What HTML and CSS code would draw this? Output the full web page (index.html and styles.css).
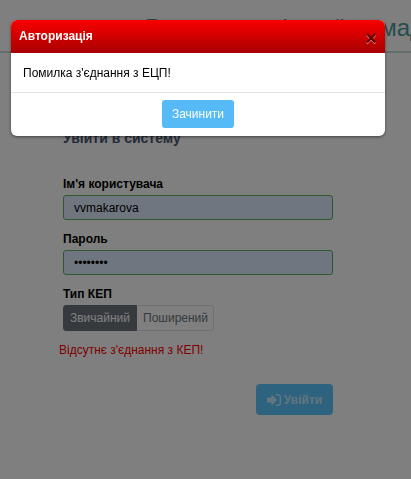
FILE: index.html
```html
<!DOCTYPE html>
<html lang="uk">
<head>
<meta charset="utf-8">
<title>Авторизація</title>
<link rel="stylesheet" href="styles.css">
</head>
<body>
<header class="top">
  <h1 class="top-title">Реєстр рад міської громад</h1>
</header>
<main class="login">
  <h2 class="login-title">Увійти в систему</h2>
  <label class="field-label" for="u">Ім'я користувача</label>
  <input class="field" id="u" type="text" value="vvmakarova">
  <label class="field-label" for="p">Пароль</label>
  <input class="field" id="p" type="password" value="12345678">
  <div class="field-label">Тип КЕП</div>
  <div class="toggle">
    <span class="toggle-btn active">Звичайний</span><span class="toggle-btn">Поширений</span>
  </div>
  <p class="error">Відсутнє з'єднання з КЕП!</p>
  <div class="actions">
    <button class="submit" type="button">
      <svg class="submit-icon" viewBox="0 0 14 12" width="14" height="12" aria-hidden="true"><path fill="currentColor" d="M0 3.6h4.6V.6L10 6l-5.4 5.4v-3H0z"/><path fill="none" stroke="currentColor" stroke-width="1.4" d="M8.5.8h2.8A2 2 0 0 1 13.3 2.8v6.4a2 2 0 0 1-2 2H8.5"/></svg>
      Увійти
    </button>
  </div>
</main>
<div class="backdrop"></div>
<section class="modal">
  <div class="modal-head">
    <span class="modal-title">Авторизація</span>
    <span class="modal-close">×</span>
  </div>
  <div class="modal-body">Помилка з'єднання з ЕЦП!</div>
  <div class="modal-foot"><button class="modal-btn" type="button">Зачинити</button></div>
</section>
</body>
</html>
```

FILE: styles.css
```css
* { box-sizing: border-box; }
html, body { height: 100%; }
body {
  margin: 0;
  overflow: hidden;
  background: #fff;
  color: #000;
  font-family: "Liberation Sans", Arial, sans-serif;
  font-size: 12px;
}
.top {
  height: 53px;
  padding: 13px 0 0 145px;
  border-bottom: 2px solid #c4dada;
  overflow: hidden;
}
.top-title {
  margin: 0;
  font-size: 24px;
  line-height: 30px;
  font-weight: 400;
  word-spacing: -5px;
  color: #4d9a9a;
  white-space: nowrap;
}
.login {
  width: 270px;
  margin-left: 63px;
  padding-top: 77px;
}
.login-title {
  margin: 0 0 29px;
  font-size: 14px;
  line-height: 17px;
  font-weight: 700;
  color: #4a5a70;
}
.field-label {
  display: block;
  padding-top: 1px;
  margin-bottom: 4px;
  font-size: 12px;
  line-height: 14px;
  font-weight: 700;
}
.field {
  display: block;
  width: 100%;
  height: 25px;
  margin-bottom: 11px;
  padding: 0 10px;
  border: 1px solid #5ab45a;
  border-radius: 3px;
  background: #e0ecfe;
  font: 12px "Liberation Sans", Arial, sans-serif;
  color: #000;
}
.toggle { display: inline-flex; }
.toggle-btn {
  padding: 0 5px 0 6px;
  height: 26px;
  line-height: 24px;
  border: 1px solid #dee2e6;
  border-left: 0;
  border-radius: 0 3px 3px 0;
  color: #6c757d;
  font-size: 12px;
}
.toggle-btn.active {
  padding: 0 6px;
  border: 1px solid #6c757d;
  border-radius: 3px 0 0 3px;
  background: #6c757d;
  color: #fff;
}
.error {
  margin: 12px 0 0 -4px;
  line-height: 15px;
  font-size: 12px;
  color: #f00;
}
.actions { display: flex; justify-content: flex-end; margin-top: 26px; }
.submit {
  display: flex;
  align-items: center;
  justify-content: center;
  gap: 3px;
  width: 77px;
  height: 31px;
  padding: 0;
  border: 0;
  border-radius: 4px;
  background: #5cc6ff;
  color: rgba(255, 255, 255, .65);
  font: 700 12px "Liberation Sans", Arial, sans-serif;
}
.backdrop {
  position: fixed;
  inset: 0;
  background: rgba(0, 0, 0, .5);
}
.modal {
  position: fixed;
  top: 20px;
  left: 11px;
  width: 374px;
  height: 116px;
  display: flex;
  flex-direction: column;
  border-radius: 6px;
  background: #fff;
  overflow: hidden;
  box-shadow: 0 1px 3px rgba(0, 0, 0, .5);
}
.modal-head {
  height: 33px;
  display: flex;
  align-items: center;
  justify-content: space-between;
  padding: 0 8px 2px;
  background: linear-gradient(#f90000, #a80000);
}
.modal-title { color: #fff; font-size: 12px; font-weight: 700; }
.modal-close {
  margin-top: 4px;
  font-size: 20px;
  font-weight: 700;
  line-height: 1;
  color: #000;
  opacity: .5;
  text-shadow: 0 1px 0 #fff;
}
.modal-body {
  height: 40px;
  padding: 13px 12px 0;
  font-size: 12px;
  line-height: 15px;
  border-bottom: 1px solid #e5e5e5;
}
.modal-foot { flex: 1; display: flex; justify-content: center; align-items: flex-start; padding-top: 7px; }
.modal-btn {
  width: 72px;
  height: 28px;
  padding: 0;
  border: 0;
  border-radius: 3px;
  background: #56baf7;
  color: #fff;
  font: 12px "Liberation Sans", Arial, sans-serif;
}
```
